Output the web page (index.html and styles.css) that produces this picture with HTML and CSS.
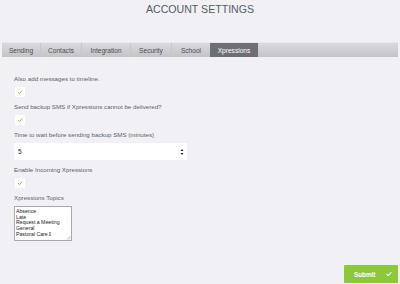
FILE: index.html
```html
<!DOCTYPE html>
<html>
<head>
<meta charset="utf-8">
<link rel="stylesheet" href="styles.css">
</head>
<body>
<div class="page">
  <h1 class="title">ACCOUNT SETTINGS</h1>
  <nav class="tabs">
    <span class="tab">Sending</span>
    <span class="tab">Contacts</span>
    <span class="tab">Integration</span>
    <span class="tab">Security</span>
    <span class="tab">School</span>
    <span class="tab active">Xpressions</span>
  </nav>
  <form class="form">
    <div class="field">
      <label class="label">Also add messages to timeline.</label>
      <span class="check"><svg viewBox="0 0 10 10" width="10" height="10"><path d="M3 5.2 L4.5 6.6 L7.2 3.6" fill="none" stroke="#8cc63f" stroke-width="1"/></svg></span>
    </div>
    <div class="field">
      <label class="label">Send backup SMS if Xpressions cannot be delivered?</label>
      <span class="check"><svg viewBox="0 0 10 10" width="10" height="10"><path d="M3 5.2 L4.5 6.6 L7.2 3.6" fill="none" stroke="#8cc63f" stroke-width="1"/></svg></span>
    </div>
    <div class="field">
      <label class="label">Time to wait before sending backup SMS (minutes)</label>
      <div class="select"><span>5</span><svg viewBox="0 0 4 8" width="4" height="8"><path d="M0.5 3 L2 1 L3.5 3 Z M0.5 5 L2 7 L3.5 5 Z" fill="#222"/></svg></div>
    </div>
    <div class="field">
      <label class="label">Enable Incoming Xpressions</label>
      <span class="check"><svg viewBox="0 0 10 10" width="10" height="10"><path d="M3 5.2 L4.5 6.6 L7.2 3.6" fill="none" stroke="#8cc63f" stroke-width="1"/></svg></span>
    </div>
    <div class="field">
      <label class="label">Xpressions Topics</label>
      <div class="textarea">
        <div>Absence</div>
        <div>Late</div>
        <div>Request a Meeting</div>
        <div>General</div>
        <div>Pastoral Care<span class="ibeam">I</span></div>
        <svg class="grip" viewBox="0 0 5 5" width="5" height="5"><path d="M1 4.5 L4.5 1 M2.8 4.5 L4.5 2.8" stroke="#999" stroke-width="0.6"/></svg>
      </div>
    </div>
  </form>
  <div class="actions">
    <button class="submit" type="button"><span>Submit</span><svg viewBox="0 0 10 10" width="8" height="8"><path d="M2 5.2 L4 7 L8 2.8" fill="none" stroke="#fff" stroke-width="1.3"/></svg></button>
  </div>
</div>
</body>
</html>
```
FILE: styles.css
```css
html, body {
  margin: 0;
  padding: 0;
  background: #f1f0f5;
}
body {
  font-family: "Liberation Sans", Arial, sans-serif;
  color: #555a60;
  width: 400px;
  height: 284px;
  overflow: hidden;
}
.page {
  display: flex;
  flex-direction: column;
  height: 284px;
}
.title {
  margin: 0;
  padding-top: 3px;
  height: 42px;
  box-sizing: border-box;
  text-align: center;
  font-weight: normal;
  font-size: 10.6px;
  color: #515c68;
}
.tabs {
  margin: 0 2px;
  height: 15px;
  display: flex;
  background: linear-gradient(#d9dadd, #c3c4c8);
  border-top: 1px solid #e6e7ea;
  box-sizing: border-box;
}
.tab {
  display: flex;
  align-items: center;
  justify-content: center;
  font-size: 6.6px;
  color: #4a4d52;
  border-right: 1px solid #c6c7ca;
  box-sizing: border-box;
}
.tab:nth-child(1) { width: 39px; }
.tab:nth-child(2) { width: 41px; }
.tab:nth-child(3) { width: 49px; }
.tab:nth-child(4) { width: 41px; }
.tab:nth-child(5) { width: 38px; border-right: none; }
.tab.active {
  width: 48px;
  background: #6c6f74;
  color: #fff;
  border-right: none;
}
.form {
  padding: 18px 14px 0;
  display: flex;
  flex-direction: column;
  gap: 6px;
}
.field {
  display: flex;
  flex-direction: column;
  align-items: flex-start;
  gap: 4px;
}
.label {
  font-size: 6.2px;
  line-height: 8px;
  color: #5b6168;
}
.check {
  width: 10px;
  height: 10px;
  margin-left: 1px;
  background: #fff;
  display: block;
}
.check svg { display: block; }
.select {
  width: 173px;
  height: 17px;
  background: #fff;
  display: flex;
  align-items: center;
  justify-content: space-between;
  padding: 0 3px 0 4px;
  box-sizing: border-box;
  font-size: 6.5px;
  color: #222;
  border-radius: 1px;
}
.select svg { display: block; }
.textarea {
  position: relative;
  width: 58px;
  height: 35px;
  background: #fff;
  border: 1px solid #a8a9ad;
  box-sizing: border-box;
  padding: 2px 1px;
  font-size: 5.2px;
  line-height: 5.7px;
  color: #222;
}
.grip {
  position: absolute;
  right: 0;
  bottom: 0;
  display: block;
}
.ibeam {
  font-family: "Liberation Serif", serif;
  font-size: 7px;
  margin-left: 1px;
  line-height: 5px;
}
.actions {
  margin-top: auto;
  display: flex;
  justify-content: flex-end;
  padding: 0 2px 1px 0;
}
.submit {
  width: 54px;
  height: 18px;
  border: none;
  border-radius: 1px;
  background: #8dc63f;
  color: #fff;
  font-family: "Liberation Sans", Arial, sans-serif;
  font-weight: bold;
  font-size: 6.3px;
  display: flex;
  align-items: center;
  justify-content: space-between;
  padding: 0 5px 0 10px;
  box-sizing: border-box;
}
.submit svg { display: block; }
```
